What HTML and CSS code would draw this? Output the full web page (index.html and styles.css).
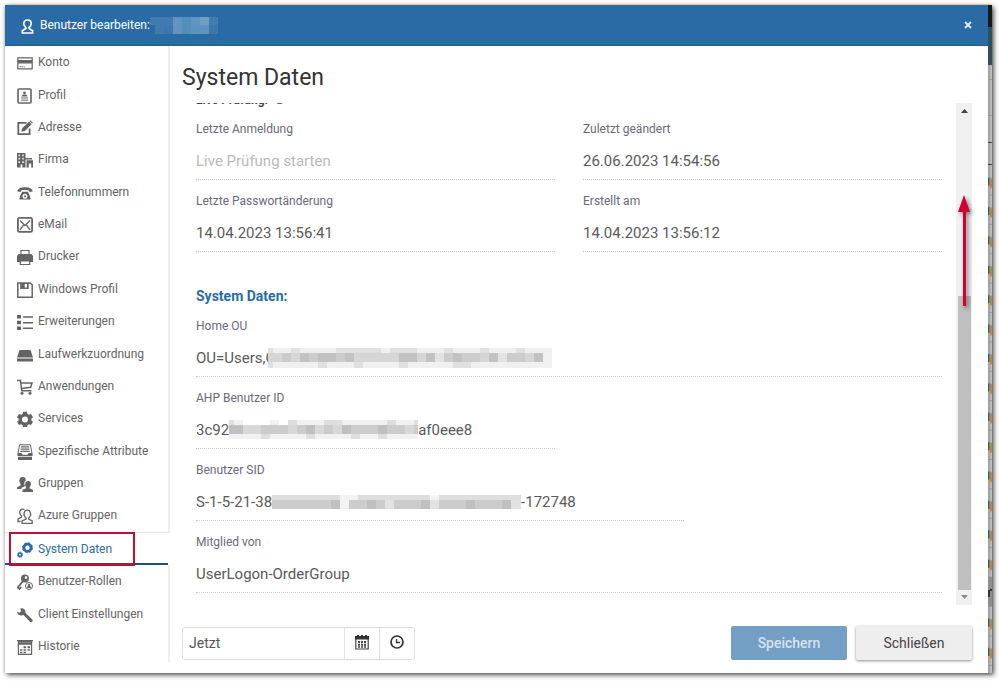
FILE: index.html
```html
<!DOCTYPE html>
<html lang="de">
<head>
<meta charset="utf-8">
<meta name="viewport" content="width=device-width, initial-scale=1">
<title>Benutzer bearbeiten</title>
<link rel="stylesheet" href="styles.css">
</head>
<body>
<div class="window">
  <section class="dialog">
    <header class="titlebar">
      <svg class="title-icon" viewBox="0 0 14 16" fill="none" stroke="#fff" stroke-width="1.8"><path d="M5.3 9.2C3.6 7.8 3 6.300 3 4.800C3 2.500 4.700 1 7 1s4 1.500 4 3.800c0 1.500-.6 3-2.300 4.400v1l3.800 2.300V15H1.500v-2.500l3.800-2.300z"/></svg>
      <h1 class="title">Benutzer bearbeiten:</h1>
      <svg class="mosaic mosaic-title" width="68" height="17" viewBox="0 0 68 17"><path fill="#427bae" d="M0 0h23v8H0zM5 8h9v9H5zM59 0h9v17h-9z"/><path fill="#3d77ab" d="M14 8h9v9h-9zM59 8h9v9h-9z"/><path fill="#6394c1" d="M23 0h9v17h-9zM41 0h18v8H41z"/><path fill="#5290bb" d="M32 0h9v17h-9z"/><path fill="#5f93bf" d="M41 8h18v9H41z"/><path fill="#719dc4" d="M50 0h9v8h-9z"/></svg>
      <button class="close" type="button" aria-label="Dialog schließen"><svg width="8" height="8" viewBox="0 0 8 8" stroke="#e4edf5" stroke-width="1.800"><path d="M1 1l6 6M7 1L1 7"/></svg></button>
    </header>
    <div class="body">
      <nav class="nav">
        <a class="item" href="#konto"><svg viewBox="0 0 16 16"><path fill="none" stroke="currentColor" stroke-width="1.200" d="M.8 2.800h14.400v11H.8z"/><path d="M1 5h14v3.400H1zM2.500 11.200h1.500v1H2.500zM4.600 11.200h1.500v1H4.600zM6.700 11.200h1v1h-1z"/></svg>Konto</a>
        <a class="item" href="#profil"><svg viewBox="0 0 16 16"><rect x="1" y="1" width="13" height="14" rx="1" fill="none" stroke="currentColor" stroke-width="1.600"/><circle cx="7.500" cy="4.800" r="1.400"/><path d="M4.500 8.600c0-1.500 1.200-2.100 3-2.100s3 .6 3 2.100zM4 9.600h7v1H4zM4 11.800h7v1H4z"/></svg>Profil</a>
        <a class="item" href="#adresse"><svg viewBox="0 0 16 16"><path fill="none" stroke="currentColor" stroke-width="1.800" d="M9.500 2.900H1.300v11.300h11.300V8.500"/><path d="M4.300 11.800l.9-3.600 6.800-6.700 2.700 2.700-6.800 6.700zM12.500 1l.9-.8 2.500 2.500-.8.9z"/></svg>Adresse</a>
        <a class="item" href="#firma"><svg viewBox="0 0 16 16"><path fill-rule="evenodd" d="M0 1h8.500v14.500H5.300V12.500H3.600v3H0zM1.500 2.500v1.700h1.400V2.500zm3.800 0v1.700h1.400V2.500zM1.500 5.800v1.700h1.400V5.800zm3.800 0v1.700h1.400V5.800zM1.500 9.200v1.700h1.400V9.200zm3.800 0v1.700h1.400V9.200zM8.500 6H15v1.500H8.500zM9.500 8.300h6.500v7.200h-1.800v-4h-2.400v4H9.500z"/></svg>Firma</a>
        <a class="item" href="#telefon"><svg viewBox="0 0 16 16"><path d="M.3 6.600C.3 3.600 4 2.200 8 2.200s7.700 1.400 7.700 4.400l-3.200.3c-.3-1.400-.6-1.900-4.500-1.900s-4.200.5-4.500 1.900z"/><path fill-rule="evenodd" d="M5 6.800h6c.4 2.400 2.600 4 2.600 7.700H2.400C2.400 10.800 4.600 9.200 5 6.800zm3 2a2.500 2.500 0 1 0 0 5 2.500 2.500 0 0 0 0-5zm0 1.500a1 1 0 1 1 0 2.100 1 1 0 0 1 0-2.100z"/></svg>Telefonnummern</a>
        <a class="item" href="#email"><svg viewBox="0 0 16 16" fill="none" stroke="currentColor"><rect x=".9" y=".9" width="14.200" height="14" rx="1.500" stroke-width="1.800"/><path stroke-width="1.300" d="M3 3.500l5 5 5-5M3 13l3.800-5.300M13 13L9.200 7.700"/></svg>eMail</a>
        <a class="item" href="#drucker"><svg viewBox="0 0 16 16"><path fill="none" stroke="currentColor" stroke-width="1.200" d="M4 6V1.500h8V6"/><path d="M1.500 5H14.500l1.500 2v6H0V7z"/><path fill="#fff" stroke="currentColor" stroke-width="1.200" d="M3.300 12h9.400v3.500H3.300z"/></svg>Drucker</a>
        <a class="item" href="#windows"><svg viewBox="0 0 16 16"><path fill="none" stroke="currentColor" stroke-width="1.500" d="M.8 1h12.600l1.800 1.800v12.400H.8z"/><path fill-rule="evenodd" d="M3.200 1h8.500v6H3.200zm4.500 1v3.500h2.200V2z"/></svg>Windows Profil</a>
        <a class="item" href="#erweiterungen"><svg viewBox="0 0 16 16"><path d="M0 1h4v3.500H0zM6 2.200h10v1.500H6zM0 6.800h4v3.500H0zM6 8h10v1.500H6zM0 12.500h4V16H0zM6 13.600h10v1.500H6z"/></svg>Erweiterungen</a>
        <a class="item" href="#laufwerk"><svg viewBox="0 0 16 16"><path d="M2.500 3h11L16 10.500H0zM0 11.500h16v3H0z"/></svg>Laufwerkzuordnung</a>
        <a class="item" href="#anwendungen"><svg viewBox="0 0 16 16"><path fill="none" stroke="currentColor" stroke-width="1.500" d="M0 1.500h3.500l1.200 10.300h9.800M4 4h11l-1.300 4.300L4.400 9.500"/><circle cx="5" cy="14.300" r="1.500"/><circle cx="13" cy="14.300" r="1.500"/></svg>Anwendungen</a>
        <a class="item" href="#services"><svg viewBox="0 0 16 16"><path fill-rule="evenodd" d="M6 .8h4l.5 2.200 1.300.7 2.200-.8 2 3.400-1.700 1.500v1.400l1.700 1.500-2 3.400-2.200-.8-1.300.7-.5 2.200H6l-.5-2.200-1.300-.7-2.200.8-2-3.400 1.700-1.500V7.800L0 6.300l2-3.400 2.200.8L5.500 3zM8 5.500a3 3 0 1 0 0 6 3 3 0 0 0 0-6z"/></svg>Services</a>
        <a class="item" href="#attribute"><svg viewBox="0 0 16 16"><path fill="none" stroke="currentColor" d="M1 9.500L2.600.8h10.800L15 9.500"/><path d="M4 2.300h8v1.200H4zM3.700 4.500h8.600v1.200H3.700zM3.300 6.800h9.400V8H3.300zM.5 9h4l1 1.700h5l1-1.700h4v3H.5zM1 12.700h14V16H1z"/></svg>Spezifische Attribute</a>
        <a class="item" href="#gruppen"><svg viewBox="0 0 16 16"><path d="M5.500 1C8 1 9 2.500 8.800 4.600 7 5.500 6.800 8 8 9.800l-1 1-2.500 1V13H0v-1.800l3.500-1.700V8C1.500 5 2.200 1 5.500 1z"/><path d="M11 5c2.400 0 3.600 2 2.600 4.600l-1 2v.8l3.400 1.400V16H5.500v-2.200l3.600-1.500v-.8C7.400 8.500 8 5 11 5z"/></svg>Gruppen</a>
        <a class="item" href="#azure"><svg viewBox="0 0 16 16" fill="none" stroke="currentColor" stroke-width="1.300"><path d="M7.500 1.300C4 .2 2 3 3 5.600c.3 1.200 1 2 1.500 2.400v1L1 11v2.500h2.500"/><path d="M9 9.800C5.500 7.300 7 2.200 10.300 2.200s4.800 5.100 1.400 7.600v1.400l3.500 1.800v2.300H5V13l4-1.800z"/></svg>Azure Gruppen</a>
        <a class="item current" href="#system" aria-current="page"><svg viewBox="0 0 16 16" fill="none" stroke="currentColor"><circle cx="10.500" cy="5.700" r="3.600" stroke-width="2.800"/><circle cx="10.500" cy="5.700" r="5" stroke-width="1" stroke-dasharray="2 1.930"/><circle cx="3" cy="12.700" r="1.700" stroke-width="1.600"/><circle cx="3" cy="12.700" r="2.700" stroke-width=".8" stroke-dasharray="1.200 .92"/></svg>System Daten<span class="highlight"></span></a>
        <a class="item" href="#rollen"><svg viewBox="0 0 16 16"><path fill="none" stroke="currentColor" stroke-width="1.800" d="M6.500 6.500L.8 13.500l1.700 1.500 1.700-2"/><path fill-rule="evenodd" d="M8 .5a4 4 0 1 1-.1 8 4 4 0 0 1 .1-8zm1 1.800a1.300 1.300 0 1 0 0 2.600 1.300 1.300 0 0 0 0-2.600z"/><circle cx="12" cy="12" r="3.500" fill="#fff" stroke="currentColor"/><path d="M12 9.700a1.300 1.300 0 0 1 .8 2.300l1.400 1v1H9.800v-1l1.400-1a1.300 1.300 0 0 1 .8-2.300z"/></svg>Benutzer-Rollen</a>
        <a class="item" href="#client"><svg viewBox="0 0 16 16"><path d="M0 4.700l2.500 1 1.600-1.500-.8-2.700C6 .7 8.800 2.400 8.500 6l6.800 6.500c1.200 1.300-.9 3.500-2.300 2.300L6.500 8C3.500 9.300.2 7.800 0 4.700z"/></svg>Client Einstellungen</a>
        <a class="item" href="#historie"><svg viewBox="0 0 16 16"><path fill="none" stroke="currentColor" stroke-width="1.200" d="M1.400 2.500h13.200v12.900H1.400z"/><path d="M0 1h16v1.300H0zM1 3.300h14v2.400H1zM6.500 7.300H9v2H6.500zM10.500 7.300H13v2h-2.500zM3 10.200h2.400v1.600H3zM6.500 10.200H9v1.600H6.500zM10.500 10.200H13v1.600h-2.500zM3 12.700h2.400v1.500H3zM6.500 12.700H9v1.500H6.500z"/></svg>Historie</a>
      </nav>
      <main class="main">
        <h2 class="heading">System Daten</h2>
        <div class="scroller">
          <form class="form" id="form">
            <div class="check">Live Prüfung: <svg width="11" height="11" viewBox="0 0 11 11" fill="none" stroke="#2a6ba5" stroke-width="1.800"><path d="M9 2.500A4.200 4.200 0 1 0 9.700 6"/></svg></div>
            <div class="field half"><label for="login">Letzte Anmeldung</label><input id="login" class="value" placeholder="Live Prüfung starten" readonly></div>
            <div class="field half"><label for="changed">Zuletzt geändert</label><input id="changed" class="value" value="26.06.2023 14:54:56" readonly></div>
            <div class="field half"><label for="pass">Letzte Passwortänderung</label><input id="pass" class="value" value="14.04.2023 13:56:41" readonly></div>
            <div class="field half"><label for="created">Erstellt am</label><input id="created" class="value" value="14.04.2023 13:56:12" readonly></div>
            <h3 class="section">System Daten:</h3>
            <div class="field full"><label for="ou">Home OU</label><output id="ou" class="value">OU=Users,C<svg class="mosaic over" width="284" height="20" viewBox="0 0 284 20"><path fill="#f0f0f0" d="M5 0h275v5H5zM0 14h284v6H0zM275 0h9v14h-9z"/><path fill="#e0e0e0" d="M0 0h5v5H0zM23 0h9v5h-9zM68 0h45v5H68zM122 0h27v5h-27zM176 0h9v5h-9zM212 0h9v5h-9zM248 0h9v5h-9zM0 14h5v6H0zM50 14h9v6h-9zM86 14h9v6h-9zM131 14h9v6h-9zM185 14h18v6h-18z"/><path fill="#d6d6d6" d="M0 5h275v9H0z"/><path fill="#ccc" d="M14 5h9v9h-9zM41 5h9v9h-9zM68 5h9v9h-9zM176 5h9v9h-9zM194 5h18v9h-18zM239 5h18v9h-18z"/><path fill="#c2c2c2" d="M32 5h9v9h-9zM50 5h18v9H50zM77 5h9v9h-9zM131 5h18v9h-18zM158 5h9v9h-9zM185 5h9v9h-9zM221 5h9v9h-9zM266 5h9v9h-9z"/><path fill="#e3e3e3" d="M167 5h9v9h-9zM230 5h9v9h-9z"/></svg></output></div>
            <div class="field half"><label for="ahp">AHP Benutzer ID</label><output id="ahp" class="value">3c92<svg class="mosaic" width="189" height="19" viewBox="0 0 189 19"><path fill="#f1f1f1" d="M0 0h189v5H0zM0 14h189v5H0z"/><path fill="#fff" d="M14 0h27v5H14zM50 0h9v5h-9z"/><path fill="#dedede" d="M0 0h5v5H0zM59 0h9v5h-9zM95 0h18v5H95zM158 0h9v5h-9zM185 0h4v5h-4zM32 14h9v5h-9zM77 14h9v5h-9zM122 14h9v5h-9zM149 14h9v5h-9z"/><path fill="#ccc" d="M0 5h189v9H0z"/><path fill="#c0c0c0" d="M0 5h14v9H0zM77 5h9v9h-9zM113 5h9v9h-9zM149 5h9v9h-9z"/><path fill="#d8d8d8" d="M14 5h18v9H14zM59 5h9v9h-9zM86 5h9v9h-9zM104 5h9v9h-9zM176 5h9v9h-9z"/></svg>af0eee8</output></div>
            <div class="field wide"><label for="sid">Benutzer SID</label><output id="sid" class="value">S-1-5-21-38<svg class="mosaic" width="249" height="14" viewBox="0 0 249 14"><path fill="#dedede" d="M0 0h249v5H0z"/><path fill="#ccc" d="M0 5h249v9H0z"/><path fill="#f2f2f2" d="M68 0h9v14h-9zM158 0h9v5h-9zM77 0h9v5h-9z"/><path fill="#e2e2e2" d="M113 5h9v9h-9zM158 5h9v9h-9zM239 5h10v9h-10z"/><path fill="#c0c0c0" d="M59 5h9v9h-9zM95 5h9v9h-9zM149 5h9v9h-9zM194 5h9v9h-9zM230 5h9v9h-9z"/></svg>-172748</output></div>
            <div class="field full"><label for="member">Mitglied von</label><input id="member" class="value" value="UserLogon-OrderGroup" readonly></div>
          </form>
          <div class="scrollbar" aria-hidden="true">
            <svg class="up" width="7" height="4" viewBox="0 0 7 4"><path d="M0 4l3.500-4L7 4z"/></svg>
            <div class="thumb"></div>
            <svg class="down" width="7" height="4" viewBox="0 0 7 4"><path d="M0 0h7L3.500 4z"/></svg>
            <svg class="arrow" width="18" height="118" viewBox="0 0 18 118"><path d="M7 0l6 17H9v94H6V17H1z"/></svg>
          </div>
        </div>
        <footer class="footer">
          <div class="when">
            <input class="when-input" type="text" value="Jetzt" aria-label="Zeitpunkt">
            <button type="button" class="when-button" aria-label="Datum"><svg width="14" height="15" viewBox="0 0 14 15"><path fill="none" stroke="#444" stroke-width="1.200" d="M.8 3h12.400v11H.8z"/><path fill="#333" d="M0 1h14v3.500H0zM2 0h2v2H2zM6 0h2v2H6zM10 0h2v2h-2z"/><path fill="#444" d="M3 6h2v2H3zM6 6h2v2H6zM9 6h2v2H9zM3 8.700h2v2H3zM6 8.700h2v2H6zM9 8.700h2v2H9zM3 11.300h2v1.500H3zM6 11.300h2v1.500H6zM9 11.300h2v1.500H9z"/></svg></button>
            <button type="button" class="when-button" aria-label="Uhrzeit"><svg width="14" height="14" viewBox="0 0 14 14" fill="none" stroke="#333"><circle cx="7" cy="7" r="6" stroke-width="1.700"/><path stroke-width="1.300" d="M6.500 4v3.500H10"/></svg></button>
          </div>
          <button type="button" class="button save">Speichern</button>
          <button type="button" class="button cancel">Schließen</button>
        </footer>
      </main>
    </div>
  </section>
  <div class="behind" aria-hidden="true">
    <svg width="4" height="668" viewBox="0 0 4 668">
      <defs><pattern id="rows" width="4" height="29.400" patternUnits="userSpaceOnUse" y="161"><path fill="#315b78" d="M0 11.500h1.500v8H0z"/><path fill="#b98a3c" d="M2 12h2v10H2z"/><path fill="#999" d="M0 28.400h4v1H0z"/></pattern></defs>
      <path fill="#14191f" d="M0 0h4v22H0z"/><path fill="#31505f" d="M0 22h4v38H0z"/>
      <path fill="#999" d="M0 74h4v1H0zM0 110h4v1H0z"/><path fill="#444" d="M0 137h4v1H0zM0 159h4v1H0z"/>
      <path fill="url(#rows)" d="M0 161h4v507H0z"/>
      <path fill="#8e8e8e" d="M0 572h4v29H0z"/><path fill="#333" d="M0 585h2v7H0zM2 584h2v2H2z"/>
    </svg>
  </div>
</div>
</body>
</html>
```

FILE: styles.css
```css
* { box-sizing: border-box; }

body {
  margin: 0;
  min-height: 100vh;
  display: flex;
  padding: 5px 8px 9px 5px;
  background: #fff;
  font-family: Roboto, "Liberation Sans", sans-serif;
}

h1, h2, h3 { margin: 0; font-weight: 400; }

button, input { font-family: inherit; margin: 0; }

.window {
  flex: 1;
  display: flex;
  box-shadow: 0 0 3px rgba(0, 0, 0, .25), 2px 2px 5px rgba(0, 0, 0, .65);
}

.dialog {
  flex: 1;
  display: flex;
  flex-direction: column;
  background: #fff;
}

.behind {
  width: 4px;
  background: linear-gradient(90deg, #999, #c4c4c4);
}

.behind svg { display: block; }

.titlebar {
  display: flex;
  align-items: center;
  height: 41px;
  padding: 0 16px;
  background: #2a6ba5;
  border-bottom: 1px solid #1b5a97;
  color: #fff;
}

.title-icon { width: 13px; height: 15px; margin: 2px 6px 0 0; }

.title { font-size: 12px; line-height: 16px; }

.close {
  margin-left: auto;
  display: flex;
  padding: 0;
  border: 0;
  background: none;
}

.mosaic { flex: none; shape-rendering: crispEdges; }

.body { flex: 1; display: flex; }

.nav {
  width: 165px;
  display: flex;
  flex-direction: column;
  padding-bottom: 11px;
}

.item {
  position: relative;
  flex: 1;
  display: flex;
  align-items: center;
  gap: 5px;
  padding-left: 12px;
  border-right: 2px solid #eee;
  color: #646464;
  font-size: 12px;
  line-height: 16px;
  text-decoration: none;
}

.item svg {
  width: 16px;
  height: 16px;
  margin-top: 2px;
  fill: currentColor;
}

.item svg[fill="none"] { fill: none; }

.item.current {
  color: #2a6ba5;
  border-right-color: transparent;
  border-top: 1px solid #e4e4e4;
  box-shadow: inset 0 -2px #1d5178;
}

.highlight {
  position: absolute;
  top: -1px;
  left: 4px;
  bottom: -1px;
  width: 126px;
  border: 2px solid #cb0a31;
}

.main {
  flex: 1;
  min-width: 0;
  display: flex;
  flex-direction: column;
  padding: 17px 16px 13px 12px;
}

.heading {
  color: #333;
  font-size: 23px;
  line-height: 30px;
}

.scroller {
  flex: 1;
  min-height: 0;
  display: flex;
  margin: 10px 0 21px;
}

.form {
  flex: 1;
  height: 502px;
  overflow: hidden;
  display: grid;
  grid-template-columns: repeat(12, minmax(0, 1fr));
  align-content: end;
  gap: 12px 28px;
  padding: 0 14px 12px 14px;
}

.check {
  grid-column: span 12;
  color: #444;
  font-size: 12px;
  font-weight: 700;
  line-height: 16px;
}

.check svg { margin-left: 3px; vertical-align: -1px; }

.field { display: flex; flex-direction: column; }
.half { grid-column: span 6; }
.wide { grid-column: 1 / span 8; }
.full { grid-column: span 12; }

.field label {
  color: #6a6a76;
  font-size: 12px;
  line-height: 18px;
}

.value {
  display: flex;
  align-items: center;
  height: 42px;
  padding: 4px 0 0;
  border: 0;
  border-bottom: 1px dotted #ccc;
  background: none;
  color: #5a5a5a;
  font-size: 15px;
  line-height: 18px;
  outline: 0;
}

.value::placeholder { color: #b9b9b9; opacity: 1; }

.over { margin-left: -7px; }

.section {
  grid-column: span 12;
  padding-top: 23px;
  color: #2a6ba5;
  font-size: 14px;
  font-weight: 700;
  line-height: 18px;
}

.scrollbar {
  position: relative;
  width: 16px;
  display: flex;
  flex-direction: column;
  align-items: center;
  justify-content: space-between;
  padding: 6px 0;
  background: #f0f0f0;
}

.up { fill: #404040; }
.down { fill: #8a8a8a; }

.thumb {
  flex: none;
  width: 13px;
  height: 294px;
  margin: auto 0 5px;
  background: #c0c0c0;
}

.arrow {
  position: absolute;
  top: 92px;
  left: 1px;
  fill: #d3002f;
  filter: drop-shadow(2px 2px 2px rgba(0, 0, 0, .5));
}

.footer {
  display: flex;
  align-items: center;
  gap: 9px;
}

.when {
  display: flex;
  height: 33px;
  margin-right: auto;
  border: 1px solid #ddd;
  border-radius: 3px;
  overflow: hidden;
}

.when-input {
  width: 161px;
  padding: 0 6px;
  border: 0;
  color: #555;
  font-size: 14px;
  outline: 0;
}

.when-button {
  width: 35px;
  display: flex;
  align-items: center;
  justify-content: center;
  padding: 0 0 2px;
  border: 0;
  border-left: 1px solid #e4e4e4;
  background: #fff;
}

.button {
  width: 116px;
  height: 34px;
  border: 0;
  border-radius: 2px;
  font-size: 14px;
}

.save { background: #739fc5; color: #d5e3ef; font-weight: 500; }

.cancel {
  background: #eee;
  color: #444;
  box-shadow: 0 1px 3px rgba(0, 0, 0, .45);
}
```
